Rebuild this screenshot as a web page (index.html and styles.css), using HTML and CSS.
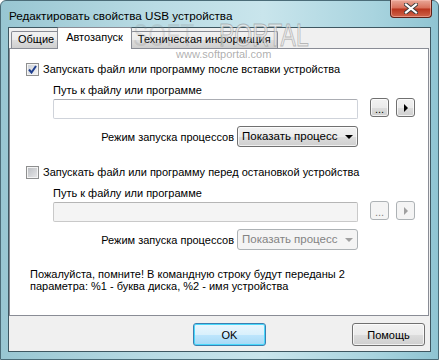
FILE: index.html
```html
<!DOCTYPE html>
<html lang="ru">
<head>
    <meta charset="UTF-8">
    <title>Редактировать свойства USB устройства</title>
    <link rel="stylesheet" href="styles.css">
</head>
<body>
    <div class="window">
        <div class="titlebar">
            <span class="title">Редактировать свойства USB устройства</span>
            <span class="close">
                <svg width="14" height="11" viewBox="0 0 14 11">
                    <path d="M2 1.5 L12 9.5 M12 1.5 L2 9.5" stroke="#3a3a3a" stroke-width="4" stroke-linecap="square"/>
                    <path d="M2 1.5 L12 9.5 M12 1.5 L2 9.5" stroke="#ffffff" stroke-width="2.2" stroke-linecap="square"/>
                </svg>
            </span>
        </div>

        <div class="client">
            <div class="tabs">
                <div class="tab">Общие</div>
                <div class="tab active">Автозапуск</div>
                <div class="tab">Техническая информация</div>
            </div>

            <div class="panel">
                <div class="group">
                    <div class="check-row">
                        <span class="checkbox">
                            <svg width="9" height="9" viewBox="0 0 9 9">
                                <path d="M1 4.5 L3.5 7.5 L8 1" fill="none" stroke="#1f3f8f" stroke-width="2"/>
                            </svg>
                        </span>
                        Запускать файл или программу после вставки устройства
                    </div>
                    <div class="field-label">Путь к файлу или программе</div>
                    <div class="path-row">
                        <div class="textbox"></div>
                        <button class="btn small browse">...</button>
                        <button class="btn small run"><span class="play"></span></button>
                    </div>
                    <div class="mode-row">
                        <span>Режим запуска процессов</span>
                        <div class="combo">Показать процесс<span class="arrow"></span></div>
                    </div>
                </div>

                <div class="group off">
                    <div class="check-row">
                        <span class="checkbox empty"></span>
                        Запускать файл или программу перед остановкой устройства
                    </div>
                    <div class="field-label">Путь к файлу или программе</div>
                    <div class="path-row">
                        <div class="textbox"></div>
                        <button class="btn small browse">...</button>
                        <button class="btn small run"><span class="play"></span></button>
                    </div>
                    <div class="mode-row">
                        <span>Режим запуска процессов</span>
                        <div class="combo">Показать процесс<span class="arrow"></span></div>
                    </div>
                </div>

                <p class="note">Пожалуйста, помните! В командную строку будут переданы 2<br>параметра: %1 - буква диска, %2 - имя устройства</p>
            </div>

            <div class="footer">
                <button class="btn wide default">OK</button>
                <button class="btn wide">Помощь</button>
            </div>
        </div>

        <div class="watermark">
            <span class="soft">SOFT</span><span class="portal">PORTAL</span>
            <span class="site">www.softportal.com</span>
        </div>
    </div>
</body>
</html>
```

FILE: styles.css
```css
body {
    margin: 0;
    padding: 0;
    font-family: "Liberation Sans", Arial, sans-serif;
    font-size: 11px;
    color: #000;
}
.window {
    position: relative;
    width: 439px;
    height: 360px;
    box-sizing: border-box;
    padding: 0 7px 7px 7px;
    background: linear-gradient(90deg, #98c6d2 0%, #b9dbe4 35%, #c9e5ec 60%, #a9d4df 85%, #8fc4d2 100%);
    border: 1px solid #4b6c78;
    border-radius: 6px 6px 0 0;
    display: flex;
    flex-direction: column;
}
.titlebar {
    height: 26px;
    flex-shrink: 0;
    display: flex;
    justify-content: space-between;
    align-items: flex-start;
}
.title {
    font-size: 11.7px;
    padding-top: 8px;
    padding-left: 1px;
    color: #000;
}
.close {
    width: 42px;
    height: 18px;
    margin-top: -1px;
    margin-right: -1px;
    box-sizing: border-box;
    border: 1px solid #5e2219;
    border-top: none;
    border-radius: 0 0 4px 4px;
    background: linear-gradient(180deg, #e9a898 0%, #d86f59 48%, #b8341c 52%, #cf644a 100%);
    box-shadow: inset 0 0 0 1px rgba(255, 200, 190, 0.5);
    display: flex;
    justify-content: center;
    align-items: center;
}
.client {
    flex: 1;
    min-height: 0;
    background: #f0f0f0;
    border: 1px solid #3e5761;
    display: flex;
    flex-direction: column;
}
.tabs {
    height: 20px;
    flex-shrink: 0;
    display: flex;
    align-items: flex-end;
    padding-left: 2px;
}
.tab {
    height: 16px;
    line-height: 15px;
    padding: 0 6px;
    border: 1px solid #898c95;
    border-bottom: none;
    margin-right: -1px;
    background: linear-gradient(180deg, #f2f2f2 0%, #ebebeb 50%, #dddddd 51%, #cfcfcf 100%);
    border-radius: 2px 2px 0 0;
}
.tab.active {
    height: 21px;
    line-height: 19px;
    margin: 0 -2px -1px -3px;
    padding: 0 8px;
    background: #ffffff;
    position: relative;
    z-index: 1;
}
.tab.active + .tab {
    margin-left: 1px;
}
.panel {
    height: 253px;
    flex-shrink: 0;
    background: #ffffff;
    border: 1px solid #898c95;
    margin-right: 1px;
    padding: 13px 0 0 16px;
}
.group {
    height: 89px;
    margin-bottom: 14px;
}
.check-row {
    height: 14px;
    line-height: 14px;
    display: flex;
    align-items: center;
    gap: 4px;
}
.checkbox {
    width: 13px;
    height: 13px;
    box-sizing: border-box;
    border: 1px solid #8e8f8f;
    background: linear-gradient(135deg, #cbcfd5 0%, #f6f6f6 100%);
    box-shadow: inset 0 0 0 1px #f4f4f4;
    display: flex;
    justify-content: center;
    align-items: center;
}
.checkbox.empty {
    background: linear-gradient(135deg, #b9bcc1 0%, #e9e9ea 100%);
}
.field-label {
    margin: 8px 0 0 27px;
    height: 12px;
    line-height: 12px;
}
.path-row {
    display: flex;
    align-items: flex-start;
    margin: 2px 0 0 27px;
    height: 22px;
}
.textbox {
    width: 305px;
    height: 20px;
    margin-top: 1px;
    box-sizing: border-box;
    border: 1px solid #cfd3da;
    border-top-color: #abadb3;
    border-radius: 2px;
    background: #fff;
}
.btn {
    font-family: "Liberation Sans", Arial, sans-serif;
    font-size: 11px;
    color: #000;
    border: 1px solid #707070;
    border-radius: 3px;
    background: linear-gradient(180deg, #f2f2f2 0%, #ebebeb 50%, #dddddd 51%, #cfcfcf 100%);
    box-shadow: inset 0 0 0 1px rgba(255, 255, 255, 0.7);
    padding: 0;
}
.btn.small {
    width: 19px;
    height: 19px;
    line-height: 14px;
    display: flex;
    justify-content: center;
    align-items: center;
}
.browse {
    margin-left: 12px;
    padding-top: 3px;
}
.run {
    margin-left: 7px;
}
.play {
    width: 0;
    height: 0;
    border-top: 4px solid transparent;
    border-bottom: 4px solid transparent;
    border-left: 4px solid #000;
    margin-left: 1px;
}
.mode-row {
    display: flex;
    align-items: center;
    justify-content: flex-end;
    gap: 3px;
    width: 305px;
    height: 21px;
    margin: 6px 0 0 27px;
}
.combo {
    width: 121px;
    height: 21px;
    box-sizing: border-box;
    border: 1px solid #707070;
    border-radius: 3px;
    background: linear-gradient(180deg, #f2f2f2 0%, #ebebeb 50%, #dddddd 51%, #cfcfcf 100%);
    box-shadow: inset 0 0 0 1px rgba(255, 255, 255, 0.7);
    font-size: 11.5px;
    line-height: 19px;
    padding-left: 4px;
    display: flex;
    justify-content: space-between;
    align-items: center;
}
.arrow {
    width: 0;
    height: 0;
    border-left: 4px solid transparent;
    border-right: 4px solid transparent;
    border-top: 4px solid #000;
    margin-right: 4px;
}
.off .textbox {
    background: #f4f4f4;
    border-color: #c9c9c9;
    border-top-color: #b5b5b5;
}
.off .btn,
.off .combo {
    background: #f4f4f4;
    border-color: #adb2b5;
    color: #838383;
    box-shadow: none;
}
.off .play {
    border-left-color: #a0a0a0;
}
.off .arrow {
    border-top-color: #a0a0a0;
}
.note {
    margin: 5px 0 0 4px;
    line-height: 12px;
}
.footer {
    flex: 1;
    display: flex;
    justify-content: flex-end;
    align-items: flex-start;
    gap: 86px;
    padding: 7px 5px 0 0;
}
.btn.wide {
    width: 73px;
    height: 23px;
}
.btn.default {
    border-color: #3c7fb1;
    background: linear-gradient(180deg, #eaf6fd 0%, #d9f0fc 50%, #bee6fd 51%, #a7d9f5 100%);
    box-shadow: inset 0 0 0 1px #48d8fb;
}
.watermark {
    position: absolute;
    left: 132px;
    top: 19px;
    width: 190px;
    height: 42px;
    pointer-events: none;
    white-space: nowrap;
}
.soft,
.portal {
    display: inline-block;
    font-family: "Liberation Sans", Arial, sans-serif;
    font-size: 31px;
    line-height: 32px;
    transform: scaleX(0.74);
    transform-origin: left top;
}
.soft {
    width: 86px;
    color: rgba(140, 140, 140, 0.22);
}
.portal {
    color: rgba(235, 235, 235, 0.7);
    -webkit-text-stroke: 1px rgba(130, 130, 130, 0.5);
}
.site {
    position: absolute;
    left: 43px;
    top: 28px;
    font-size: 11px;
    color: rgba(120, 120, 120, 0.6);
}
```
